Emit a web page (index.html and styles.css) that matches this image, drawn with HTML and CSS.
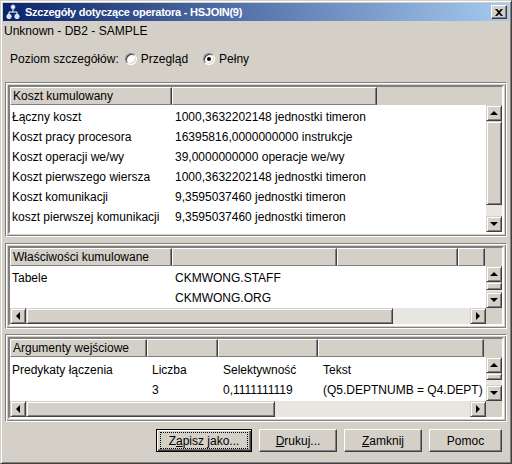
FILE: index.html
```html
<!DOCTYPE html>
<html>
<head>
<meta charset="utf-8">
<link rel="stylesheet" href="styles.css">
</head>
<body>
<div class="window">
  <div class="titlebar">
    <svg class="ticon" width="16" height="16" viewBox="0 0 16 16">
      <circle cx="8" cy="3" r="2.2" fill="#fff" stroke="#6a8fd8" stroke-width="0.8"/>
      <path d="M8 5 V8 M4 11 V8 H12 V11" stroke="#fff" stroke-width="1" fill="none"/>
      <circle cx="4" cy="12.5" r="2.2" fill="#cfe0ff" stroke="#fff" stroke-width="0.8"/>
      <circle cx="12" cy="12.5" r="2.2" fill="#cfe0ff" stroke="#fff" stroke-width="0.8"/>
    </svg>
    <span class="ttext">Szczegóły dotyczące operatora - HSJOIN(9)</span>
    <div class="tclose">
      <svg width="8" height="7" viewBox="0 0 8 7"><path d="M0 0 L2 0 L4 2 L6 0 L8 0 L5 3.5 L8 7 L6 7 L4 5 L2 7 L0 7 L3 3.5 Z" fill="#000"/></svg>
    </div>
  </div>
  <div class="subtitle">Unknown - DB2 - SAMPLE</div>
  <div class="level">
    <span class="lbl">Poziom szczegółów:</span>
    <span class="radio"></span><span class="rtext">Przegląd</span>
    <span class="radio on"></span><span class="rtext">Pełny</span>
  </div>

  <div class="pane p1">
    <div class="scroll">
      <div class="grid g1">
        <div class="thead">
          <div class="th w1">Koszt kumulowany</div>
          <div class="th w2"></div>
        </div>
        <div class="tbody b1">
          <div class="tr"><div class="td w1">Łączny koszt</div><div class="td c2">1000,3632202148 jednostki timeron</div></div>
          <div class="tr"><div class="td w1">Koszt pracy procesora</div><div class="td c2">16395816,0000000000 instrukcje</div></div>
          <div class="tr"><div class="td w1">Koszt operacji we/wy</div><div class="td c2">39,0000000000 operacje we/wy</div></div>
          <div class="tr"><div class="td w1">Koszt pierwszego wiersza</div><div class="td c2">1000,3632202148 jednostki timeron</div></div>
          <div class="tr"><div class="td w1">Koszt komunikacji</div><div class="td c2">9,3595037460 jednostki timeron</div></div>
          <div class="tr"><div class="td w1">koszt pierwszej komunikacji</div><div class="td c2">9,3595037460 jednostki timeron</div></div>
        </div>
        <div class="vscroll">
          <div class="sbtn"><span class="arr up"></span></div>
          <div class="thumb vt1"></div>
          <div class="track"></div>
          <div class="sbtn"><span class="arr down"></span></div>
        </div>
      </div>
    </div>
  </div>

  <div class="pane p2">
    <div class="scroll">
      <div class="grid g2">
        <div class="thead">
          <div class="th w1">Właściwości kumulowane</div>
          <div class="th wa"></div>
          <div class="th wb"></div>
          <div class="th wc"></div>
        </div>
        <div class="tbody b2">
          <div class="tr"><div class="td w1">Tabele</div><div class="td c2">CKMWONG.STAFF</div></div>
          <div class="tr"><div class="td w1"></div><div class="td c2">CKMWONG.ORG</div></div>
        </div>
        <div class="vscroll">
          <div class="sbtn"><span class="arr up"></span></div>
          <div class="thumb vt2"></div>
          <div class="track"></div>
          <div class="sbtn"><span class="arr down"></span></div>
        </div>
        <div class="hscroll">
          <div class="sbtn"><span class="arr left"></span></div>
          <div class="thumb ht2"></div>
          <div class="track"></div>
          <div class="sbtn"><span class="arr right"></span></div>
        </div>
        <div class="corner"></div>
      </div>
    </div>
  </div>

  <div class="pane p3">
    <div class="scroll">
      <div class="grid g3">
        <div class="thead">
          <div class="th x1">Argumenty wejściowe</div>
          <div class="th x2"></div>
          <div class="th x3"></div>
          <div class="th x4"></div>
        </div>
        <div class="tbody b3">
          <div class="tr"><div class="td x1">Predykaty łączenia</div><div class="td x2 pl">Liczba</div><div class="td x3 pl">Selektywność</div><div class="td x4 pl">Tekst</div></div>
          <div class="tr"><div class="td x1"></div><div class="td x2 pl">3</div><div class="td x3 pl">0,1111111119</div><div class="td x4 pl">(Q5.DEPTNUMB = Q4.DEPT)</div></div>
        </div>
        <div class="vscroll">
          <div class="sbtn"><span class="arr up"></span></div>
          <div class="thumb vt3"></div>
          <div class="track"></div>
          <div class="sbtn"><span class="arr down"></span></div>
        </div>
        <div class="hscroll">
          <div class="sbtn"><span class="arr left"></span></div>
          <div class="thumb ht3"></div>
          <div class="track"></div>
          <div class="sbtn"><span class="arr right"></span></div>
        </div>
        <div class="corner"></div>
      </div>
    </div>
  </div>

  <div class="buttons">
    <div class="btn default bz"><span class="focus">Z<u>a</u>pisz jako...</span></div>
    <div class="btn bd"><span><u>D</u>rukuj...</span></div>
    <div class="btn bd"><span><u>Z</u>amknij</span></div>
    <div class="btn bp"><span>Pomoc</span></div>
  </div>
</div>
</body>
</html>
```
FILE: styles.css
```css
html, body {
  margin: 0;
  padding: 0;
  background: #D4D0C8;
}

.window {
  width: 512px;
  height: 464px;
  box-sizing: border-box;
  border: 1px solid;
  border-color: #D4D0C8 #404040 #404040 #D4D0C8;
  box-shadow: inset 1px 1px #fff, inset -1px -1px #808080;
  padding: 2px;
  background: #D4D0C8;
  font: 12px "Liberation Sans", Arial, sans-serif;
  color: #000;
  display: flex;
  flex-direction: column;
}

.titlebar {
  height: 18px;
  flex: none;
  background: linear-gradient(to right, #0A246A, #A6CAF0);
  display: flex;
  align-items: center;
  padding-left: 2px;
  color: #fff;
}

.ticon {
  flex: none;
}

.ttext {
  margin-left: 4px;
  font: bold 11px "Liberation Sans", Arial, sans-serif;
  letter-spacing: -0.25px;
  flex: 1;
  white-space: nowrap;
}

.tclose {
  width: 16px;
  height: 14px;
  box-sizing: border-box;
  margin-right: 2px;
  background: #D4D0C8;
  border: 1px solid;
  border-color: #fff #404040 #404040 #fff;
  box-shadow: inset -1px -1px #808080;
  display: flex;
  align-items: center;
  justify-content: center;
}

.subtitle {
  height: 18px;
  line-height: 18px;
  margin-top: 1px;
  padding-left: 1px;
  flex: none;
}

.level {
  height: 18px;
  margin-top: 10px;
  padding-left: 7px;
  display: flex;
  align-items: center;
  flex: none;
}

.radio {
  width: 12px;
  height: 12px;
  box-sizing: border-box;
  border-radius: 50%;
  border: 1px solid;
  border-color: #808080 #fff #fff #808080;
  box-shadow: inset 1px 1px #404040, inset -1px -1px #D4D0C8;
  background: #fff;
  margin-left: 6px;
  position: relative;
  flex: none;
}

.radio + .rtext {
  margin-left: 4px;
}

.rtext + .radio {
  margin-left: 15px;
}

.radio.on::after {
  content: "";
  position: absolute;
  left: 3px;
  top: 3px;
  width: 4px;
  height: 4px;
  border-radius: 50%;
  background: #000;
}

.pane {
  margin: 0 2px;
  border: 1px solid;
  border-color: #808080 #fff #fff #808080;
  box-shadow: inset 1px 1px #fff, inset -1px -1px #808080;
  padding: 2px;
  flex: none;
}

.p1 { margin-top: 14px; }
.p2 { margin-top: 6px; }
.p3 { margin-top: 5px; }

.scroll {
  border: 2px solid;
  border-color: #808080 #fff #fff #808080;
  box-shadow: inset 1px 1px #404040, inset -1px -1px #D4D0C8;
  padding: 0;
}

.grid {
  display: grid;
  grid-template-columns: 476px 16px;
  background: #D4D0C8;
}

.g1 { grid-template-rows: 18px 127px; }
.g2 { grid-template-rows: 18px 42px 16px; }
.g3 { grid-template-rows: 18px 44px 16px; }

.thead {
  grid-column: 1 / 3;
  display: flex;
  background: #D4D0C8;
  overflow: hidden;
}

.th {
  height: 18px;
  box-sizing: border-box;
  flex: none;
  border: 1px solid;
  border-color: #fff #404040 #808080 #fff;
  box-shadow: inset -1px 0 #808080;
  padding-left: 2px;
  line-height: 16px;
  white-space: nowrap;
}

.w1 { width: 162px; }
.w2 { width: 205px; }
.wa { width: 165px; }
.wb { width: 121px; }
.wc { width: 27px; }

.x1 { width: 137px; }
.x2 { width: 71px; }
.x3 { width: 100px; }
.x4 { width: 166px; }

.tbody {
  background: #fff;
  overflow: hidden;
}

.b1 { padding-top: 2px; }
.b2 { padding-top: 2px; }
.b3 { padding-top: 3px; }

.tr {
  display: flex;
  height: 20px;
  line-height: 20px;
  white-space: nowrap;
}

.td {
  flex: none;
  box-sizing: border-box;
  padding-left: 2px;
}

.c2 { padding-left: 3px; }
.pl { padding-left: 5px; }

.vscroll {
  display: flex;
  flex-direction: column;
}

.hscroll {
  display: flex;
  flex-direction: row;
}

.corner {
  background: #D4D0C8;
}

.sbtn, .thumb {
  box-sizing: border-box;
  background: #D4D0C8;
  border: 1px solid;
  border-color: #D4D0C8 #404040 #404040 #D4D0C8;
  box-shadow: inset 1px 1px #fff, inset -1px -1px #808080;
  flex: none;
}

.sbtn {
  width: 16px;
  height: 16px;
  display: flex;
  align-items: center;
  justify-content: center;
}

.track {
  flex: 1;
  background: #E8E6E1;
}

.vt1 { height: 84px; }
.vt2 { height: 8px; }
.vt3 { height: 7px; }
.ht2 { width: 367px; }
.ht3 { width: 249px; }

.arr {
  width: 0;
  height: 0;
  border: 0 solid transparent;
}

.arr.up {
  border-width: 0 4px 4px 4px;
  border-bottom-color: #000;
}

.arr.down {
  border-width: 4px 4px 0 4px;
  border-top-color: #000;
}

.arr.left {
  border-width: 4px 4px 4px 0;
  border-right-color: #000;
}

.arr.right {
  border-width: 4px 0 4px 4px;
  border-left-color: #000;
}

.buttons {
  display: flex;
  justify-content: flex-end;
  gap: 7px;
  margin-top: 7px;
  margin-right: 7px;
  flex: none;
}

.btn {
  height: 23px;
  box-sizing: border-box;
  border: 1px solid;
  border-color: #fff #404040 #404040 #fff;
  box-shadow: inset -1px -1px #808080;
  display: flex;
  align-items: center;
  justify-content: center;
  flex: none;
}

.btn.default {
  border-color: #000;
  box-shadow: inset 1px 1px #fff, inset -1px -1px #404040, inset -2px -2px #808080;
  padding: 2px 3px;
  align-items: stretch;
}

.focus {
  border: 1px dotted #000;
  flex: 1;
  box-sizing: border-box;
  display: flex;
  align-items: center;
  justify-content: center;
}

.bz { width: 96px; }
.bd { width: 78px; }
.bp { width: 73px; }
```
